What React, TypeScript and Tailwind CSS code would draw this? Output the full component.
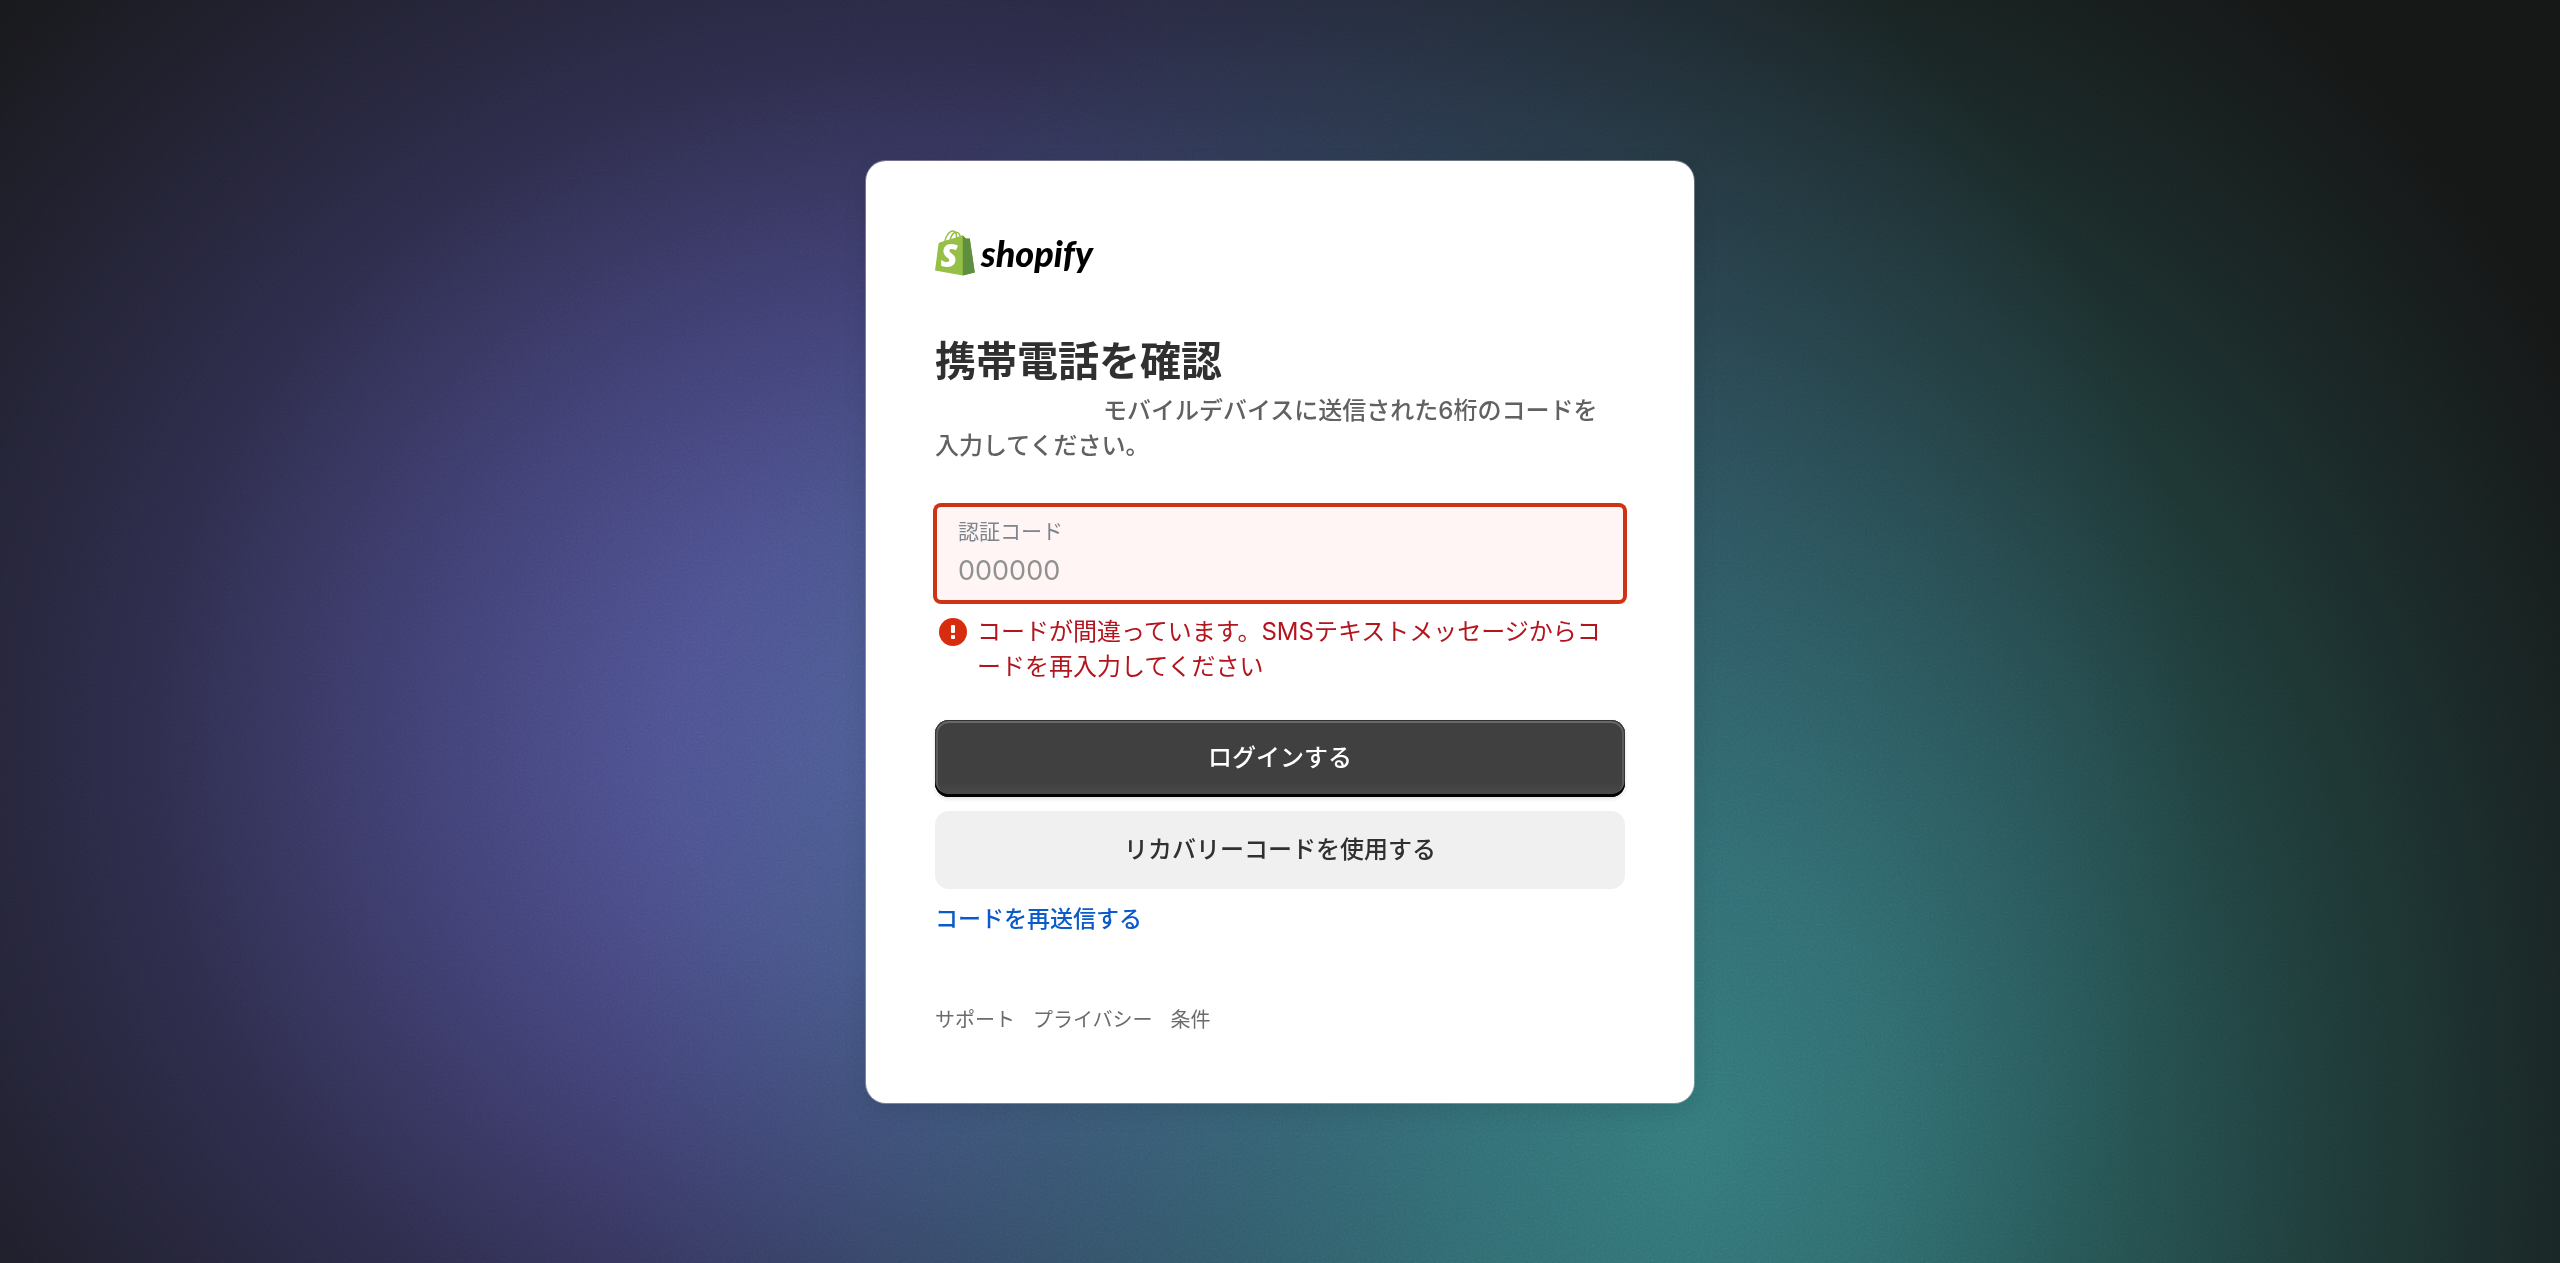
import { ReactNode } from "react";

const links = ["サポート", "プライバシー", "条件"];

const ShopifyLogo = () => (
  <a href="#" aria-label="shopify" className="flex items-center gap-1.5">
    <svg viewBox="0 0 110 125" className="h-[46px] w-10" aria-hidden="true">
      <path
        fill="#95bf47"
        fillRule="evenodd"
        d="M95.9 23.9c-.1-.6-.6-1-1.1-1s-9.3-.2-9.3-.2-7.4-7.2-8.1-7.9c-.7-.7-2.2-.5-2.7-.3 0 0-1.4.4-3.7 1.1-.4-1.3-1-2.8-1.8-4.4-2.6-5-6.5-7.7-11.1-7.7-.3 0-.6 0-1 .1-.1-.2-.3-.3-.4-.5-2-2.2-4.6-3.2-7.7-3.1-6 .2-12 4.5-16.8 12.2-3.4 5.4-6 12.2-6.7 17.5-6.9 2.1-11.7 3.6-11.8 3.7-3.5 1.1-3.6 1.2-4 4.5C9.4 40.4 0 110.9 0 110.9l76.4 13.2 33.1-8.2S96 24.5 95.9 23.9zM67.2 16.8c-1.8.5-3.8 1.2-5.9 1.8 0-3-.4-7.3-1.8-10.9 4.5.9 6.7 6 7.7 9.1zM57.2 19.9c-4 1.2-8.4 2.6-12.8 3.9 1.2-4.7 3.6-9.4 6.4-12.5 1.1-1.1 2.6-2.4 4.3-3.2 1.8 3.5 2.2 8.4 2.1 11.8zM49.1 4c1.4 0 2.6.3 3.6.9-1.6.8-3.2 2.1-4.7 3.6-3.8 4.1-6.7 10.5-7.9 16.6-3.6 1.1-7.2 2.2-10.5 3.2C31.7 18.8 39.8 4.3 49.1 4z"
      />
      <path
        fill="#5e8e3e"
        d="M94.8 22.9c-.5 0-9.3-.2-9.3-.2s-7.4-7.2-8.1-7.9c-.3-.3-.6-.4-1-.5v109.8l33.1-8.2S96 24.5 95.9 23.9c-.1-.6-.6-1-1.1-1z"
      />
      <text
        x="15"
        y="102"
        fill="#fff"
        fontSize="86"
        fontWeight="800"
        fontStyle="italic"
        fontFamily="'Open Sans', sans-serif"
      >
        S
      </text>
    </svg>
    <span className="font-['Lato',sans-serif] text-[36px] leading-[46px] font-black text-black italic">
      shopify
    </span>
  </a>
);

const ErrorMessage = ({ id, children }: { id: string; children: ReactNode }) => (
  <div id={id} className="mt-3 flex gap-2.5 pr-4 pl-1 text-[#b3151e]">
    <svg viewBox="0 0 28 28" className="mt-1 size-7 shrink-0" aria-hidden="true">
      <circle cx="14" cy="14" r="14" fill="#d72c0d" />
      <rect x="12" y="7" width="4" height="8" rx="1" fill="#fff" />
      <rect x="12" y="17" width="4" height="4" rx="1" fill="#fff" />
    </svg>
    <p className="text-2xl leading-[35px] [line-break:loose]">{children}</p>
  </div>
);

const Background = () => (
  <div className="absolute inset-0 bg-[#151616]">
    <div className="absolute inset-0 bg-[radial-gradient(ellipse_50%_90%_at_36%_59%,#555aa0_0%,#54589ee6_20%,#504f96b8_40%,#4b478c75_60%,#48448642_78%,#4743841a_92%,transparent_100%)]" />
    <div className="absolute inset-0 bg-[radial-gradient(ellipse_42%_108%_at_66%_90%,#357d7ef0_0%,#337b7cd1_20%,#3077769e_40%,#2d726d66_60%,#2b6b6633_80%,#29686414_92%,transparent_100%)]" />
    <svg className="absolute inset-0 size-full opacity-20 mix-blend-overlay" aria-hidden="true">
      <filter id="grain">
        <feTurbulence type="fractalNoise" baseFrequency="0.5" numOctaves="2" />
        <feColorMatrix type="saturate" values="0" />
      </filter>
      <rect width="100%" height="100%" filter="url(#grain)" />
    </svg>
  </div>
);

export default function App() {
  return (
    <div
      lang="ja"
      className="relative flex min-h-screen items-center justify-center overflow-hidden font-['Inter','Noto_Sans_CJK_JP',sans-serif]"
    >
      <Background />
      <main className="relative w-full max-w-[828px] rounded-[20px] bg-white px-[69px] pt-[69px] pb-17 shadow-[0_0_0_1px_rgba(255,255,255,0.3),0_8px_24px_rgba(0,0,0,0.1)]">
        <ShopifyLogo />
        <h1 className="mt-[61px] text-[41px] leading-[48px] font-bold text-[#303030]">
          携帯電話を確認
        </h1>
        <p className="mt-2 pr-4 text-2xl leading-[35px] font-medium text-[#616161]">
          <span className="inline-block w-[168px]" />
          モバイルデバイスに送信された6桁のコードを入力してください。
        </p>
        <form onSubmit={(e) => e.preventDefault()}>
          <div className="mt-[42px] flex flex-col rounded-md border-2 border-[#cf3315] bg-[#fff5f4] px-[21px] pt-2.5 pb-3 ring-2 ring-[#cf3315]">
            <label htmlFor="code" className="text-[21px] leading-[30px] text-[#7c858d]">
              認証コード
            </label>
            <input
              id="code"
              type="text"
              inputMode="numeric"
              placeholder="000000"
              aria-describedby="code-error"
              className="mt-1.5 h-[35px] w-full bg-transparent text-[27px] leading-[35px] text-[#303030] outline-none placeholder:text-[#919191]"
            />
          </div>
          <ErrorMessage id="code-error">
            コードが間違っています。SMSテキストメッセージからコードを再入力してください
          </ErrorMessage>
          <button
            type="submit"
            className="mt-9 h-[77px] w-full rounded-[14px] bg-linear-to-b from-[#404040] from-80% to-[#4a4a4a] text-2xl font-medium text-white shadow-[inset_0_-3px_0_#000,inset_0_0_0_1px_#333,inset_0_2px_0_1px_#686868,inset_0_0_0_3px_#5c5c5c,0_2px_4px_rgba(0,0,0,0.12)]"
          >
            ログインする
          </button>
          <button
            type="button"
            className="mt-3.5 h-[78px] w-full rounded-[14px] bg-[#f0f0f0] text-2xl font-medium text-[#303030]"
          >
            リカバリーコードを使用する
          </button>
        </form>
        <a
          href="#"
          className="mt-3.5 inline-block text-[23px] leading-8 font-medium text-[#0a5bc9]"
        >
          コードを再送信する
        </a>
        <footer className="mt-[70px] flex gap-[18px] text-xl leading-[30px] text-[#6b6b6b]">
          {links.map((link) => (
            <a key={link} href="#">
              {link}
            </a>
          ))}
        </footer>
      </main>
    </div>
  );
}
